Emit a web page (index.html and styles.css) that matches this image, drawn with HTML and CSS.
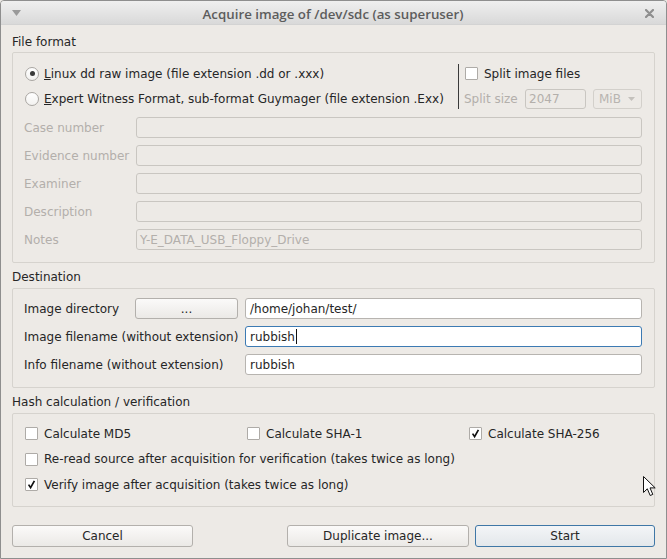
FILE: index.html
```html
<!DOCTYPE html>
<html>
<head>
<meta charset="utf-8">
<link rel="stylesheet" href="styles.css">
</head>
<body>
<div class="window">
  <div class="titlebar">
    <svg class="tb-menu" width="9" height="6" viewBox="0 0 9 6"><path d="M0 0 H9 L4.5 6 Z" fill="#9a9a9a"/></svg>
    <span class="title">Acquire image of /dev/sdc (as superuser)</span>
    <svg class="tb-close" width="9" height="9" viewBox="0 0 9 9"><path d="M1 1 L8 8 M8 1 L1 8" stroke="#8f8f8f" stroke-width="2.2" stroke-linecap="round"/></svg>
  </div>
  <div class="content">
    <div class="section-label first">File format</div>
    <div class="group group-format">
      <div class="format-top">
        <div class="radios">
          <div class="row"><span class="radio checked"></span><span><u>L</u>inux dd raw image (file extension .dd or .xxx)</span></div>
          <div class="row"><span class="radio"></span><span><u>E</u>xpert Witness Format, sub-format Guymager (file extension .Exx)</span></div>
        </div>
        <div class="vsep"></div>
        <div class="split">
          <div class="row"><span class="check"></span><span>Split image files</span></div>
          <div class="row split-size">
            <span class="disabled">Split size</span>
            <span class="field field-disabled field-size">2047</span>
            <span class="combo">MiB <svg width="7" height="4" viewBox="0 0 7 4"><path d="M0 0 H7 L3.5 4 Z" fill="#c4c1bc"/></svg></span>
          </div>
        </div>
      </div>
      <div class="fields">
        <span class="disabled">Case number</span><span class="field field-disabled"></span>
        <span class="disabled">Evidence number</span><span class="field field-disabled"></span>
        <span class="disabled">Examiner</span><span class="field field-disabled"></span>
        <span class="disabled">Description</span><span class="field field-disabled"></span>
        <span class="disabled">Notes</span><span class="field field-disabled">Y-E_DATA_USB_Floppy_Drive</span>
      </div>
    </div>

    <div class="section-label">Destination</div>
    <div class="group group-dest">
      <span>Image directory</span>
      <span class="button">...</span>
      <span class="field">/home/johan/test/</span>
      <span class="span2">Image filename (without extension)</span>
      <span class="field focused">rubbish<span class="caret"></span></span>
      <span class="span2">Info filename (without extension)</span>
      <span class="field">rubbish</span>
    </div>

    <div class="section-label">Hash calculation / verification</div>
    <div class="group group-hash">
      <div class="row"><span class="check"></span><span>Calculate MD5</span></div>
      <div class="row"><span class="check"></span><span>Calculate SHA-1</span></div>
      <div class="row"><span class="check checked"><svg width="11" height="11" viewBox="0 0 11 11"><path d="M2.6 5.6 L4.6 8.6 L8.4 1.8" fill="none" stroke="#111" stroke-width="1.7"/></svg></span><span>Calculate SHA-256</span></div>
      <div class="row wide"><span class="check"></span><span>Re-read source after acquisition for verification (takes twice as long)</span></div>
      <div class="row wide"><span class="check checked"><svg width="11" height="11" viewBox="0 0 11 11"><path d="M2.6 5.6 L4.6 8.6 L8.4 1.8" fill="none" stroke="#111" stroke-width="1.7"/></svg></span><span>Verify image after acquisition (takes twice as long)</span></div>
    </div>

    <div class="buttons">
      <span class="button big">Cancel</span>
      <span class="spacer"></span>
      <span class="button big dup">Duplicate image...</span>
      <span class="button big default">Start</span>
    </div>
  </div>
  <svg class="cursor" width="14" height="21" viewBox="0 0 14 21"><path d="M0.5 0.5 V16.5 L4.3 12.8 L7.2 19.5 L9.8 18.4 L7 11.9 L12.2 11.9 Z" fill="#fff" stroke="#111" stroke-width="1" stroke-linejoin="round"/></svg>
</div>
</body>
</html>
```
FILE: styles.css
```css
* { box-sizing: border-box; }
html, body { margin: 0; padding: 0; background: #edeae6; }
body {
  font-family: "DejaVu Sans", sans-serif;
  font-size: 12px;
  color: #262626;
}
.window {
  position: relative;
  width: 667px;
  height: 559px;
  border: 1px solid #8e8e8e;
  border-radius: 4px 4px 0 0;
  background: #edeae6;
  overflow: hidden;
}
.titlebar {
  height: 24px;
  display: flex;
  align-items: center;
  padding: 0 12px 0 11px;
  background: linear-gradient(#efefef, #d9d9d9);
  border-bottom: 1px solid #d3d3d3;
}
.tb-menu { flex: none; margin-top: 1px; }
.title {
  flex: 1;
  text-align: center;
  font-family: "Open Sans", sans-serif;
  font-weight: 600;
  font-size: 13.3px;
  color: #5c5c5c;
  padding-top: 3px;
}
.tb-close { flex: none; margin-top: 2px; }
.content {
  padding: 8px 11px 0 11px;
}
.section-label {
  height: 19px;
  line-height: 19px;
  margin-bottom: 1px;
}
.section-label.first { margin-bottom: 0; }
.group {
  border: 1px solid #d6d3ce;
  border-radius: 2px;
  margin-bottom: 5px;
}
.row {
  display: flex;
  align-items: center;
  height: 21px;
  white-space: nowrap;
}
.radio {
  flex: none;
  width: 14px;
  height: 14px;
  border-radius: 50%;
  border: 1px solid #a9a6a2;
  background: linear-gradient(#ffffff, #f3f2f0);
  margin: 0 5px 0 1px;
  position: relative;
}
.radio.checked::after {
  content: "";
  position: absolute;
  left: 3.5px; top: 3.5px;
  width: 5px; height: 5px;
  border-radius: 50%;
  background: #3a3a3a;
}
.check {
  flex: none;
  width: 13px;
  height: 13px;
  border: 1px solid #aeaba7;
  border-radius: 1px;
  background: #fff;
  margin: 0 6px 0 1px;
  display: flex;
  align-items: center;
  justify-content: center;
}
.disabled { color: #b3afab; }

.group-format { padding: 10px 12px 12px 11px; }
.format-top { display: flex; }
.radios { display: flex; flex-direction: column; gap: 4px; width: 434px; }
.vsep { width: 1px; background: #3a3a3a; margin: 1px 0 0 0; height: 45px; }
.split { display: flex; flex-direction: column; gap: 4px; padding-left: 5px; flex: 1; }
.split-size { gap: 0; }
.split-size .disabled { width: 61px; }
.field {
  display: flex;
  align-items: center;
  height: 21px;
  border: 1px solid #b7b4b0;
  border-radius: 3px;
  background: #fff;
  padding: 0 3px;
  white-space: nowrap;
}
.field-disabled {
  background: #edeae6;
  border-color: #c9c6c1;
  color: #b3afab;
}
.field-size { width: 61px; height: 20px; }
.combo {
  margin-left: 7px;
  width: 49px;
  height: 20px;
  border: 1px solid #d3d0cb;
  border-radius: 3px;
  color: #b8b4b0;
  display: flex;
  align-items: center;
  justify-content: space-between;
  padding: 0 6px 0 5px;
}
.fields {
  margin-top: 8px;
  display: grid;
  grid-template-columns: 106px 1fr;
  column-gap: 6px;
  row-gap: 7px;
  align-items: center;
}
.group-dest {
  padding: 9px 12px 12px 11px;
  display: grid;
  grid-template-columns: 104px 103px 1fr;
  column-gap: 7px;
  row-gap: 7px;
  align-items: center;
}
.group-dest .span2 { grid-column: span 2; white-space: nowrap; }
.group-dest .field { padding-left: 4px; }
.field.focused { border-color: #3c7ab3; position: relative; }
.caret { display: inline-block; width: 1px; height: 15px; background: #111; margin-left: 1px; }
.button {
  display: flex;
  align-items: center;
  justify-content: center;
  height: 21px;
  border: 1px solid #b3b0ac;
  border-radius: 3px;
  background: linear-gradient(#fbfaf9, #ebe9e6);
  color: #262626;
}
.group-hash {
  padding: 9px 12px 10px 11px;
  display: grid;
  grid-template-columns: 222px 222px 1fr;
  grid-template-rows: 21px 21px 21px;
  row-gap: 4.5px;
  height: 94px;
}
.group-hash .wide { grid-column: span 3; }
.buttons {
  display: flex;
  margin-top: 18px;
  gap: 6px;
}
.button.big { width: 181px; height: 22px; }
.button.big.dup { width: 182px; }
.button.big.default { width: 180px; }
.spacer { flex: 1; }
.button.default {
  border-color: #3f77a6;
  background: linear-gradient(#f3f5f7, #e3e7eb);
}
.cursor { position: absolute; left: 642px; top: 475px; }
```
